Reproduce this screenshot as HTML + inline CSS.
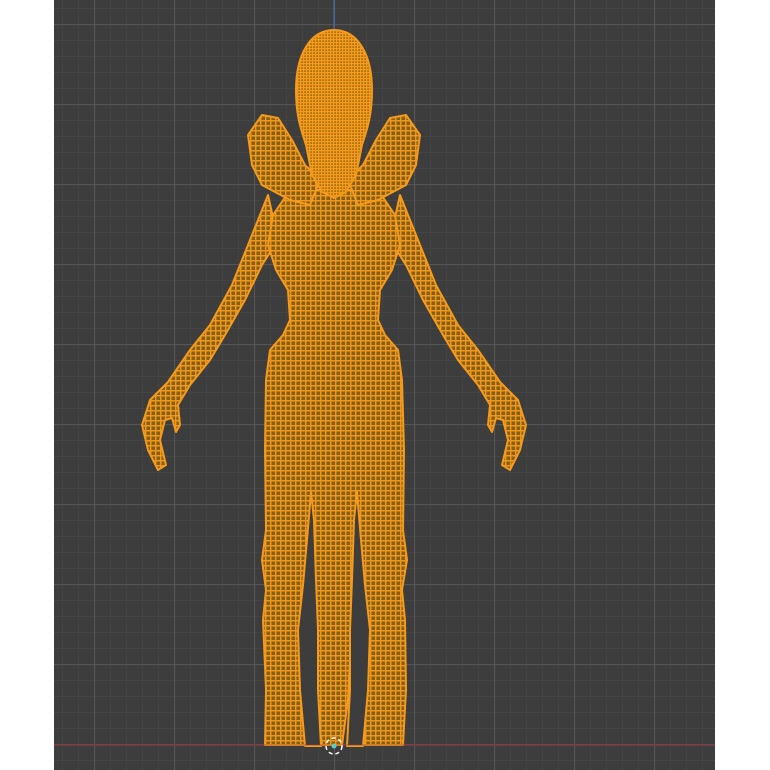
<!DOCTYPE html>
<html><head><meta charset="utf-8"><style>
html,body{margin:0;padding:0;background:#fff;width:770px;height:770px;overflow:hidden}
svg{display:block}
</style></head><body>
<svg width="770" height="770" viewBox="0 0 770 770" xmlns="http://www.w3.org/2000/svg">
<defs>
<pattern id="minor" width="16" height="16" patternUnits="userSpaceOnUse" x="14" y="8">
<rect width="16" height="16" fill="#3d3d3d"/>
<path d="M0 0.5H16M0.5 0V16" stroke="#444" stroke-width="1"/>
</pattern>
<pattern id="major" width="80" height="80" patternUnits="userSpaceOnUse" x="14" y="24">
<path d="M0 0.5H80M0.5 0V80" stroke="#555" stroke-width="1.2" fill="none"/>
</pattern>
<pattern id="wire" width="5" height="5" patternUnits="userSpaceOnUse">
<rect width="5" height="5" fill="#84600f"/>
<path d="M0 0.7H5M0.7 0V5" stroke="#f0961c" stroke-width="1.5"/>
</pattern>
<pattern id="wire2" width="3" height="3" patternUnits="userSpaceOnUse">
<rect width="3" height="3" fill="#a8730f"/>
<path d="M0 0.6H3M0.6 0V3" stroke="#f59a1a" stroke-width="1.3"/>
</pattern>
</defs>
<rect x="54" y="0" width="661" height="770" fill="url(#minor)"/>
<rect x="54" y="0" width="661" height="770" fill="url(#major)"/>
<line x1="334" y1="0" x2="334" y2="30" stroke="#4a6fb0" stroke-width="1.2"/>
<line x1="54" y1="745" x2="715" y2="745" stroke="#8a3a44" stroke-width="1.3"/>
<g stroke="#f59a1a" stroke-width="2" stroke-linejoin="round">
<!-- arms -->
<path fill="url(#wire)" d="M268 195 L250 240 L232 285 L210 325 L190 350 L168 382 L150 400 L142 425 L148 450 L158 470 L166 465 L160 440 L165 420 L172 418 L176 432 L180 425 L178 405 L190 385 L210 360 L225 335 L245 300 L262 265 L278 240 Z"/>
<path fill="url(#wire)" d="M400 195 L418 240 L436 285 L458 325 L478 350 L500 382 L518 400 L526 425 L520 450 L510 470 L502 465 L508 440 L503 420 L496 418 L492 432 L488 425 L490 405 L478 385 L458 360 L443 335 L423 300 L406 265 L390 240 Z"/>
<!-- legs + tail + torso -->
<path fill="url(#wire)" d="M290 190 L378 190 L395 215 L400 245 L392 270 L380 290 L378 320 L385 335 L398 350 L402 380 L404 450 L403 530 L407 560 L402 590 L405 620 L406 690 L403 745 L365 745 L363 690 L366 630 L360 580 L354 560 L352 620 L348 700 L342 745 L322 745 L316 700 L313 620 L310 580 L305 630 L302 690 L305 745 L265 745 L266 690 L263 620 L266 590 L262 560 L266 530 L265 450 L266 380 L270 350 L283 335 L290 320 L288 290 L276 270 L268 245 L273 215 Z"/>
<!-- gaps between legs -->
<path fill="#3d3d3d" d="M311 492 L314 520 L316 580 L318 630 L318 690 L321 746 L305 746 L300 690 L298 630 L303 585 L307 540 Z"/>
<path fill="#3d3d3d" d="M357 492 L354 520 L352 580 L350 630 L350 690 L347 746 L363 746 L368 690 L370 630 L365 585 L361 540 Z"/>
<!-- spikes -->
<path fill="url(#wire)" d="M262 115 L278 118 L292 140 L305 165 L320 180 L310 205 L290 200 L262 185 L252 165 L248 135 Z"/>
<path fill="url(#wire)" d="M406 115 L390 118 L376 140 L363 165 L348 180 L358 205 L378 200 L406 185 L416 165 L420 135 Z"/>
<!-- head -->
<path fill="url(#wire2)" d="M334 30 C358 30 372 55 372 90 C372 118 366 132 362 145 L356 175 L346 192 L334 198 L322 192 L312 175 L306 145 C302 132 296 118 296 90 C296 55 310 30 334 30 Z"/>
</g>
<line x1="54" y1="745" x2="715" y2="745" stroke="#8a3a44" stroke-width="1.3" opacity="0.5"/>
<!-- 3D cursor -->
<circle cx="334" cy="746" r="8" fill="none" stroke="#fff" stroke-width="1.5" stroke-dasharray="4 3"/>
<circle cx="334" cy="746" r="2.5" fill="#5cc"/>
</svg>
</body></html>
